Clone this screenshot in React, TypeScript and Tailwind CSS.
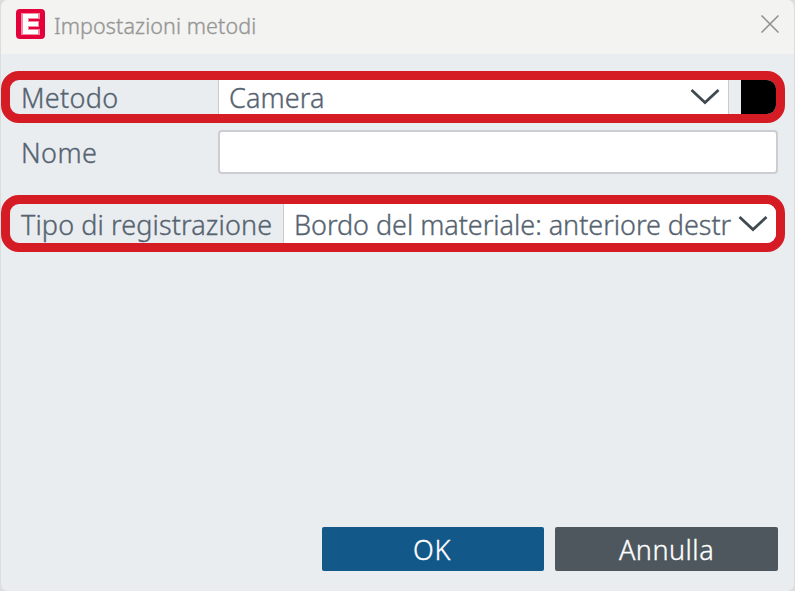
import type { ReactNode } from 'react'

interface HighlightProps {
  className: string
  children: ReactNode
}

function Highlight({ className, children }: HighlightProps) {
  return (
    <div className={`flex w-[784px] overflow-hidden rounded-[18px] border-[#d51c24] ${className}`}>
      {children}
    </div>
  )
}

function Chevron({ className }: { className: string }) {
  return (
    <svg viewBox="0 0 30 18" className={`h-[18px] w-[30px] shrink-0 ${className}`} fill="none">
      <path d="M1.5 2 15 14.5 28.5 2" stroke="#404b51" strokeWidth="2.8" />
    </svg>
  )
}

function Logo() {
  return (
    <svg viewBox="0 0 29 30" className="h-[30px] w-[29px] shrink-0">
      <rect width="29" height="30" rx="4" fill="#e4003a" />
      <path d="M5 4h19v6H13v2h10v6H13v2h11v6H5z" fill="#f48ba5" />
      <path d="M7 5h15v4H7zM7 13h15v4H7zM7 21h15v4H7zM7 5h5v20H7z" fill="#fff" />
    </svg>
  )
}

export default function App() {
  return (
    <div className="h-[591px] w-[795px] overflow-hidden bg-[#dcdddd] px-px font-['Noto_Sans',sans-serif] text-[27px] leading-[34px] font-light whitespace-nowrap text-[#566370] [-webkit-text-stroke:0.35px]">
      <div className="flex h-full flex-col overflow-hidden rounded-[7px] bg-[#e9edf0]">
        <header className="flex h-[54px] shrink-0 items-center bg-[#f3f3f1] pr-[15px] pb-[6px] pl-[15px]">
          <Logo />
          <h1 className="ml-[9px] pt-[3px] text-[21.5px] font-light tracking-[0.1px] text-[#969696]">Impostazioni metodi</h1>
          <svg viewBox="0 0 18 18" className="ml-auto h-[18px] w-[18px]" fill="none">
            <path d="M.5.5l17 17M17.5.5l-17 17" stroke="#8e8e8e" strokeWidth="1.5" />
          </svg>
        </header>

        <Highlight className="mt-[17px] h-[52px] border-[9px]">
          <span className="w-[208px] pt-px pl-[11px] tracking-[0.3px]">Metodo</span>
          <div className="flex w-[511px] items-center border-x border-[#c9cbd0] bg-white pl-[10px]">
            <span className="pt-[2px] tracking-[0.1px]">Camera</span>
            <Chevron className="mr-[8px] ml-auto" />
          </div>
          <div className="ml-[12px] flex-1 bg-black" />
        </Highlight>

        <div className="mt-[7px] flex h-[44px] items-center">
          <label htmlFor="nome" className="w-[217px] pt-[2px] pl-[20px] tracking-[0.4px]">Nome</label>
          <input id="nome" className="h-[44px] w-[560px] rounded-[4px] border-2 border-[#cccdd2] bg-white" />
        </div>

        <Highlight className="mt-[21px] h-[57px] border-[9px]">
          <span className="w-[273px] pt-[4px] pl-[11px] tracking-[0.11px]">Tipo di registrazione</span>
          <div className="flex flex-1 items-center border-l border-[#c9cbd0] bg-white pl-[10px]">
            <span className="w-[438px] pt-[3px] tracking-[-0.04px]">Bordo del materiale: anteriore destr</span>
            <Chevron className="ml-[6px]" />
          </div>
        </Highlight>

        <footer className="mt-auto mb-[20px] flex gap-[11px] pl-[321px] text-white">
          <button className="h-[44px] w-[222px] rounded-[2px] bg-[#125889] pt-[2px] pr-[2px] tracking-[0.6px]">OK</button>
          <button className="h-[44px] w-[223px] rounded-[2px] bg-[#4d575d] pt-[2px] tracking-[0.5px]">Annulla</button>
        </footer>
      </div>
    </div>
  )
}
